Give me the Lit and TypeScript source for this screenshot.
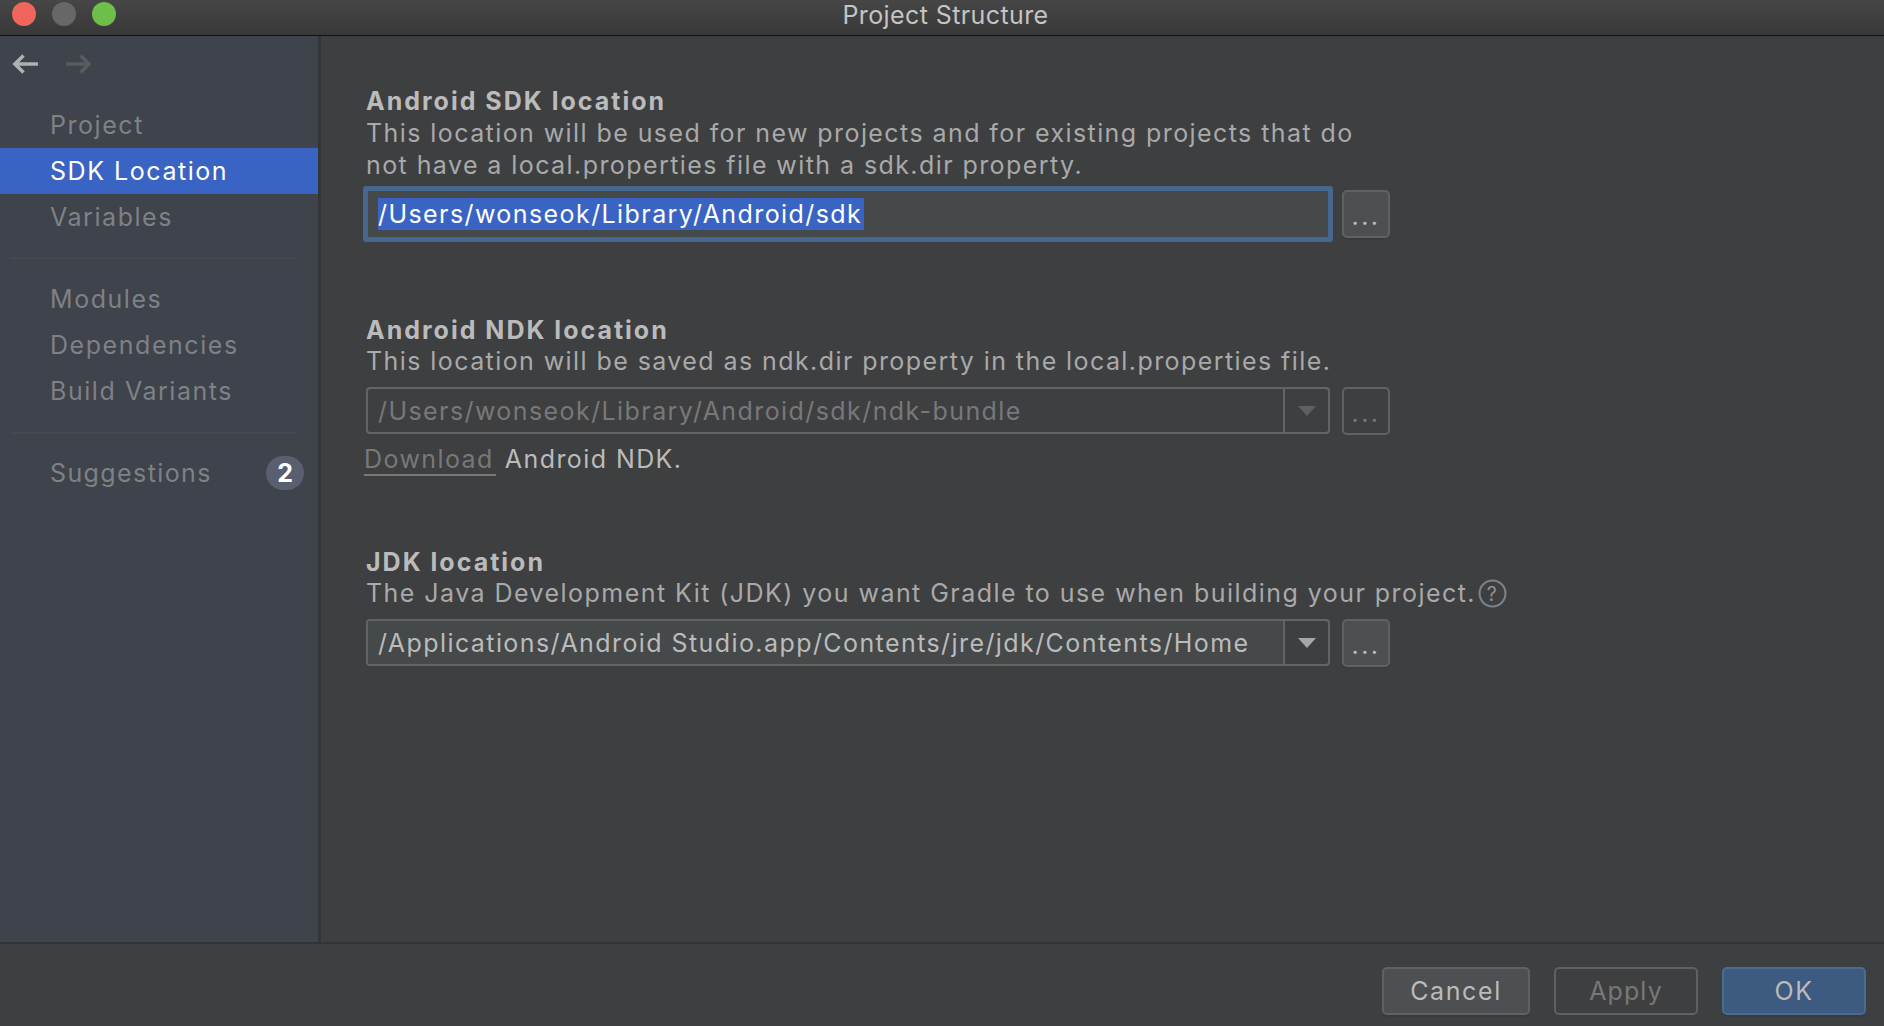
import { LitElement, html, css } from "lit";
import { customElement } from "lit/decorators.js";

@customElement("app-root")
export class AppRoot extends LitElement {
  static styles = css`
    :host { display: flex; flex-direction: column; width: 1884px; height: 1026px; overflow: hidden; background: #3e3f41; font-family: Inter, "Liberation Sans", sans-serif; font-size: 25px; letter-spacing: 1.42px; color: #bbb; }
    .titlebar { padding: 0 0 6px 7px; height: 29px; flex: none; position: relative; display: flex; align-items: center; justify-content: center; background: linear-gradient(#464646, #383838); border-bottom: 1px solid #111; color: #c4c4c4; font-size: 25px; letter-spacing: 0.4px; }
    .lights { position: absolute; left: 12px; top: 2px; display: flex; gap: 16px; }
    .lights i { width: 24px; height: 24px; border-radius: 50%; }
    .body { flex: 1; display: flex; min-height: 0; }
    .side { width: 318px; flex: none; background: #3e434c; border-right: 3px solid #333536; }
    .nav { display: flex; gap: 28px; padding: 18px 12px 0; height: 66px; box-sizing: border-box; }
    .nav svg { display: block; }
    .item { height: 46px; display: flex; align-items: center; padding: 0 14px 0 50px; color: #7f8184; line-height: 46px; letter-spacing: 1.55px; }
    .item.on { background: #3a64c3; color: #fff; }
    .item span { flex: 1; }
    .item .sg { letter-spacing: 1.4px; }
    .badge { flex: none !important; width: 38px; height: 34px; border-radius: 17px; background: #5a5f6f; color: #fff; font-weight: 700; display: flex; align-items: center; justify-content: center; font-size: 25px; letter-spacing: 0; line-height: 34px; }
    .sep { height: 2px; margin: 17px 22px 17px 10px; background: #47494a; }
    .sep.b { margin: 18px 22px 16px 10px; }
    .main { flex: 1; padding: 48px 0 0 44px; display: flex; flex-direction: column; }
    section { display: flex; flex-direction: column; }
    h3 { margin: 0 0 -1px; font-size: 25px; font-weight: 700; color: #bbb; line-height: 32.5px; padding: 1px 0 0 1px; letter-spacing: 2px; }
    p { margin: 0; line-height: 32.5px; color: #a9a9a9; padding-left: 1px; display: flex; align-items: center; }
    p.jdk { letter-spacing: 1.45px; }
    .row { display: flex; align-items: center; gap: 12px; margin-top: 9px; }
    .row.first { margin-top: 8px; }
    .focus { width: 970px; height: 56px; box-sizing: border-box; border: 5px solid #46688f; border-radius: 3px; background: #45494a; display: flex; align-items: center; padding-left: 10px; margin: -4px -3px -4px -2px; }
    .sel { background: #3a64c3; color: #fff; line-height: 32px; height: 32px; padding: 0 2px 0 0; }
    .combo { width: 964px; height: 47px; margin-left: 1px; margin-right: -1px; box-sizing: border-box; border: 2px solid #646464; border-radius: 4px; display: flex; align-items: center; }
    .combo .val { flex: 1; padding-left: 10px; background: #45494a; height: 100%; display: flex; align-items: center; color: #bbb; white-space: nowrap; }
    .combo .arrow { width: 43px; height: 100%; flex: none; border-left: 2px solid #646464; display: flex; align-items: center; justify-content: center; }
    .combo.off .val { background: none; color: #787878; }
    .dots { width: 48px; height: 48px; margin-left: 0; box-sizing: border-box; border: 2px solid #5f6263; border-radius: 5px; background: #4c5052; color: #bbb; display: flex; align-items: center; justify-content: center; box-shadow: 0 2px 0 #393b3c; line-height: 48px; letter-spacing: 2.5px; padding-top: 5px; }
    .combo + .dots { margin-left: 1px; }
    .dots.off { background: none; color: #777; box-shadow: none; }
    .note { line-height: 32px; margin-top: 8px; color: #bbb; display: flex; align-items: baseline; }
    .link { color: #787878; border-bottom: 2px solid #787878; margin: 0 9px 0 -1px; padding: 0 2px 0 0; line-height: 30px; }
    .help { margin-left: 2px; flex: none; }
    .sdk { margin-bottom: 75px; }
    .ndk { margin-bottom: 69px; }
    .footer { flex: none; height: 84px; box-sizing: border-box; border-top: 2px solid #323334; background: #3e3f41; display: flex; justify-content: flex-end; align-items: flex-start; gap: 24px; padding: 23px 18px 0 0; }
    .btn { height: 48px; box-sizing: border-box; border-radius: 5px; border: 2px solid #5f6263; background: #4c5052; color: #bbb; display: flex; align-items: center; justify-content: center; box-shadow: 0 2px 0 #393b3c; letter-spacing: 1.6px; }
    .cancel { width: 148px; }
    .apply { width: 144px; background: none; color: #787878; box-shadow: none; letter-spacing: 1.1px; }
    .ok { width: 144px; background: #3d5a80; border-color: #4a6c90; }
  `;

  arrow(color: string) {
    return html`<svg width="18" height="30" viewBox="0 0 18 30"><path d="M0 10h18L9 20z" fill=${color}></path></svg>`;
  }

  render() {
    return html`
      <div class="titlebar">
        <div class="lights">
          <i style="background:#f0665c"></i><i style="background:#666768"></i><i style="background:#6dbf49"></i>
        </div>
        Project Structure
      </div>
      <div class="body">
        <aside class="side">
          <div class="nav">
            <svg width="26" height="20" viewBox="0 0 26 20" fill="none" stroke="#aeb0b2" stroke-width="3.6"><path d="M26 10H4M11.5 1.5L3 10l8.5 8.5"></path></svg>
            <svg width="26" height="20" viewBox="0 0 26 20" fill="none" stroke="#5a5b5c" stroke-width="3.6"><path d="M0 10h22M14.500 1.500L23 10l-8.500 8.500"></path></svg>
          </div>
          <div class="item"><span>Project</span></div>
          <div class="item on"><span>SDK Location</span></div>
          <div class="item"><span>Variables</span></div>
          <div class="sep"></div>
          <div class="item"><span>Modules</span></div>
          <div class="item"><span>Dependencies</span></div>
          <div class="item"><span>Build Variants</span></div>
          <div class="sep b"></div>
          <div class="item"><span class="sg">Suggestions</span><span class="badge">2</span></div>
        </aside>
        <main class="main">
          <section class="sdk">
            <h3>Android SDK location</h3>
            <p>This location will be used for new projects and for existing projects that do</p>
            <p>not have a local.properties file with a sdk.dir property.</p>
            <div class="row first">
              <div class="focus"><span class="sel">/Users/wonseok/Library/Android/sdk</span></div>
              <div class="dots">...</div>
            </div>
          </section>
          <section class="ndk">
            <h3>Android NDK location</h3>
            <p>This location will be saved as ndk.dir property in the local.properties file.</p>
            <div class="row">
              <div class="combo off"><div class="val">/Users/wonseok/Library/Android/sdk/ndk-bundle</div><div class="arrow">${this.arrow("#5f6061")}</div></div>
              <div class="dots off">...</div>
            </div>
            <div class="note"><span class="link">Download</span>Android NDK.</div>
          </section>
          <section>
            <h3>JDK location</h3>
            <p class="jdk">The Java Development Kit (JDK) you want Gradle to use when building your project.
              <svg class="help" width="29" height="29" viewBox="0 0 28 28" fill="none"><circle cx="14" cy="14" r="12.500" stroke="#78838a" stroke-width="2"></circle><text x="14" y="21" text-anchor="middle" font-size="19" fill="#8c8f91" font-family="Inter">?</text></svg></p>
            <div class="row">
              <div class="combo"><div class="val">/Applications/Android Studio.app/Contents/jre/jdk/Contents/Home</div><div class="arrow">${this.arrow("#a5a7a9")}</div></div>
              <div class="dots">...</div>
            </div>
          </section>
        </main>
      </div>
      <footer class="footer">
        <div class="btn cancel">Cancel</div>
        <div class="btn apply">Apply</div>
        <div class="btn ok">OK</div>
      </footer>
    `;
  }
}
